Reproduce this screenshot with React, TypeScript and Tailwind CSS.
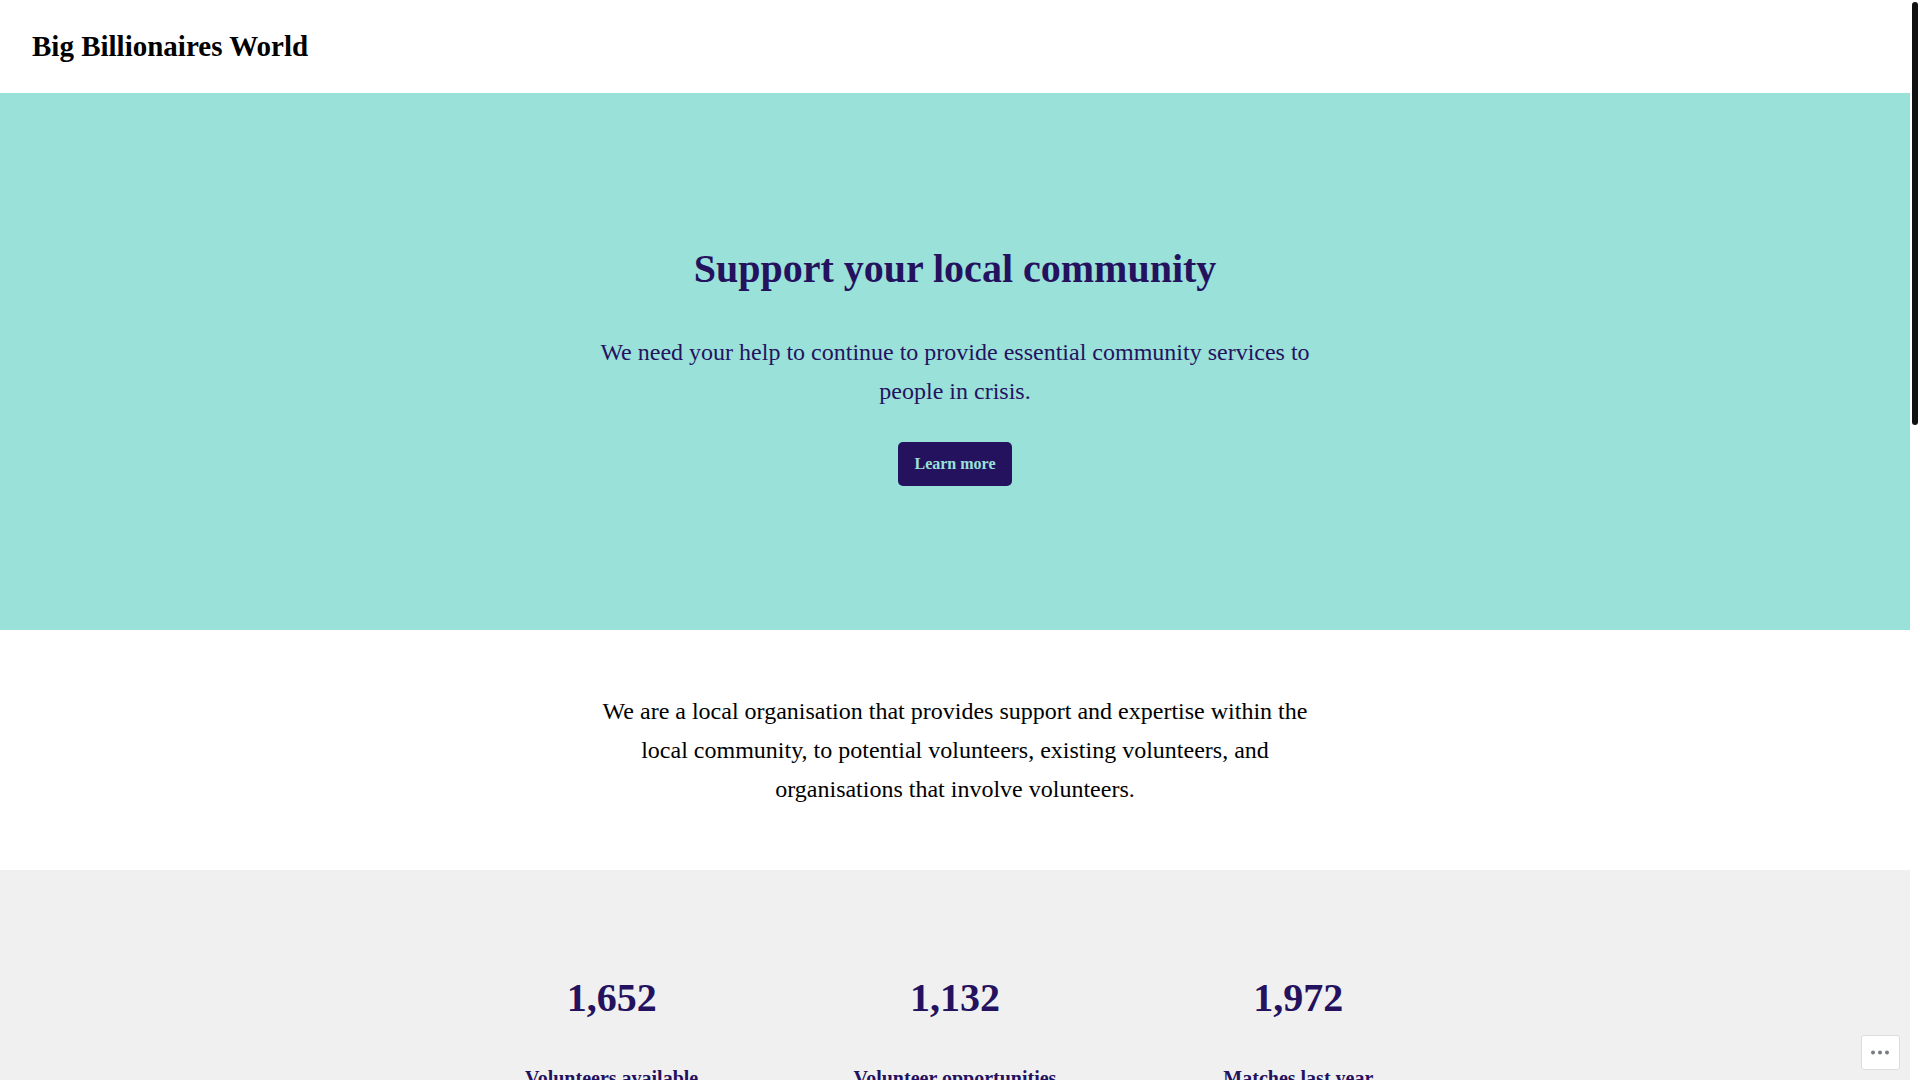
const stats = [
  { value: '1,652', label: 'Volunteers available' },
  { value: '1,132', label: 'Volunteer opportunities' },
  { value: '1,972', label: 'Matches last year' },
];

function Header() {
  return (
    <header className="px-8 py-6">
      <h1 className="text-[29px] leading-[45px] font-bold">
        <a href="#">Big Billionaires World</a>
      </h1>
    </header>
  );
}

function Hero() {
  return (
    <section className="flex flex-col items-center bg-[#9ae1d9] px-8 py-36 text-center text-[#24125f]">
      <h2 className="text-[40px] leading-[64px] font-bold">Support your local community</h2>
      <p className="mt-8 max-w-[750px] text-2xl leading-[39px]">
        We need your help to continue to provide essential community services to people in crisis.
      </p>
      <a
        href="#"
        className="mt-[31px] rounded-[5px] bg-[#24125f] px-4 py-[10px] text-base leading-6 font-bold text-[#9ae1d9]"
      >
        Learn more
      </a>
    </section>
  );
}

function Intro() {
  return (
    <section className="flex justify-center px-8 pt-[62px] pb-[61px] text-center">
      <p className="max-w-[750px] text-2xl leading-[39px]">
        We are a local organisation that provides support and expertise within the local community,
        to potential volunteers, existing volunteers, and organisations that involve volunteers.
      </p>
    </section>
  );
}

function Stats() {
  return (
    <section className="bg-[#f0f0f0] px-8 py-24 text-[#24125f]">
      <div className="mx-auto grid max-w-[998px] grid-cols-3 gap-8 text-center">
        {stats.map((s) => (
          <div key={s.label}>
            <p className="text-[40px] leading-[64px] font-bold">{s.value}</p>
            <h3 className="mt-8 text-xl leading-8 font-bold">{s.label}</h3>
          </div>
        ))}
      </div>
    </section>
  );
}

function ActionsButton() {
  return (
    <button
      type="button"
      aria-label="More actions"
      className="fixed right-5 bottom-[10px] flex h-[35px] w-[39px] items-center justify-center rounded-[3px] border border-[#dcdcde] bg-white"
    >
      <svg width="19" height="5" viewBox="0 0 19 5" fill="#787c82" aria-hidden="true">
        <circle cx="2" cy="2.5" r="2" />
        <circle cx="9" cy="2.5" r="2" />
        <circle cx="16" cy="2.5" r="2" />
      </svg>
    </button>
  );
}

export default function App() {
  return (
    <div className="flex h-screen overflow-hidden bg-white font-['Liberation_Serif',serif] text-black">
      <main className="min-w-0 flex-1">
        <Header />
        <Hero />
        <Intro />
        <Stats />
      </main>
      <div className="w-[10px] shrink-0 p-[2px]" aria-hidden="true">
        <div className="h-[39.3%] rounded-full bg-[#111]" />
      </div>
      <ActionsButton />
    </div>
  );
}
